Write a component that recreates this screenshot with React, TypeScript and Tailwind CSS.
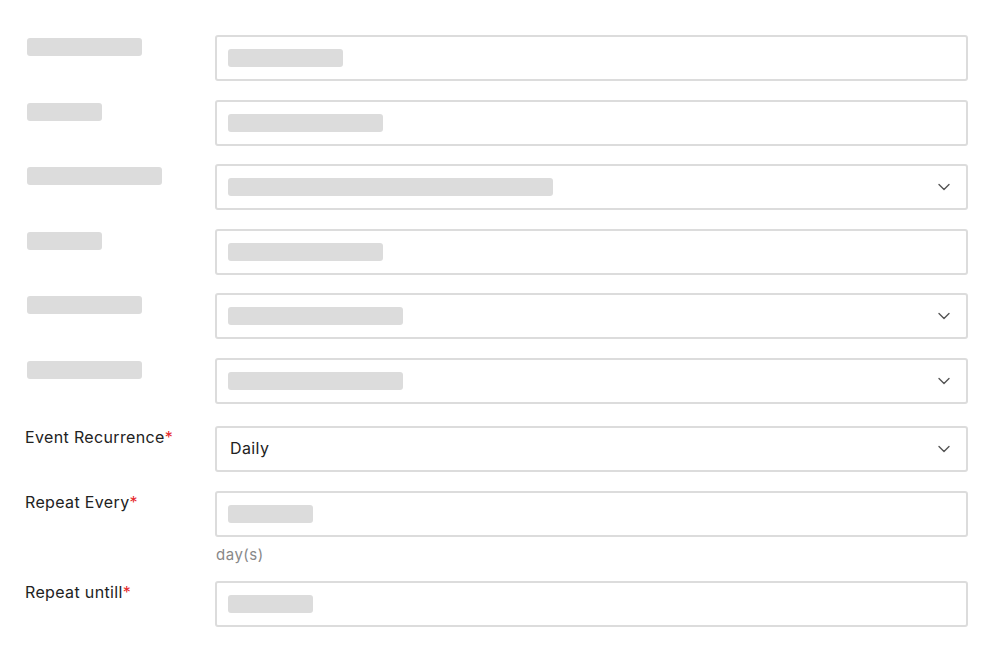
import React from "react";

const Chevron = () => (
  <svg width="12" height="8" viewBox="0 0 12 8" fill="none" className="shrink-0">
    <path d="M1 1.5 L6 6.5 L11 1.5" stroke="#555" strokeWidth="1.4" strokeLinecap="round" strokeLinejoin="round" />
  </svg>
);

const Bar = ({ w }: { w: string }) => <div className={`h-[18px] rounded-[3px] bg-[#dcdcdc] ${w}`} />;

type Row = { label: string; field: string; select?: boolean; mt: string };

const rows: Row[] = [
  { label: "w-[115px]", field: "w-[115px]", mt: "mt-0" },
  { label: "w-[75px]", field: "w-[155px]", mt: "mt-[19px]" },
  { label: "w-[135px]", field: "w-[325px]", select: true, mt: "mt-[18px]" },
  { label: "w-[75px]", field: "w-[155px]", mt: "mt-[19px]" },
  { label: "w-[115px]", field: "w-[175px]", select: true, mt: "mt-[18px]" },
  { label: "w-[115px]", field: "w-[175px]", select: true, mt: "mt-[19px]" },
];

const Box = ({ children }: { children: React.ReactNode }) => (
  <div className="flex h-[46px] w-full items-center justify-between rounded-[3px] border-2 border-[#dcdcdc] bg-white pl-[11px] pr-[16px]">
    {children}
  </div>
);

const TextLabel = ({ text }: { text: string }) => (
  <div className="w-[215px] shrink-0 pl-[25px] text-[16px] leading-[22px] tracking-[0.35px] text-[#222]">
    {text}
    <span className="text-[#e5262a]">*</span>
  </div>
);

export default function App() {
  return (
    <div
      className="min-h-[667px] w-[1000px] bg-white pt-[35px] pr-[32px]"
      style={{ fontFamily: "Inter, 'Noto Sans', sans-serif" }}
    >
      {rows.map((r, i) => (
        <div key={i} className={`flex ${r.mt}`}>
          <div className="w-[215px] shrink-0 pl-[27px] pt-[3px]">
            <Bar w={r.label} />
          </div>
          <div className="flex-1">
            <Box>
              <Bar w={r.field} />
              {r.select && <Chevron />}
            </Box>
          </div>
        </div>
      ))}
      <div className="mt-[22px] flex">
        <TextLabel text="Event Recurrence" />
        <div className="flex-1">
          <Box>
            <span className="pb-[3px] pl-[2px] text-[16px] leading-[22px] tracking-[0.4px] text-[#222]">Daily</span>
            <Chevron />
          </Box>
        </div>
      </div>
      <div className="mt-[19px] flex">
        <TextLabel text="Repeat Every" />
        <div className="flex-1">
          <Box>
            <Bar w="w-[85px]" />
          </Box>
          <div className="mt-[8px] pl-[1px] text-[15px] leading-[20px] tracking-[0.5px] text-[#888]">day(s)</div>
        </div>
      </div>
      <div className="mt-[16px] flex">
        <TextLabel text="Repeat untill" />
        <div className="flex-1">
          <Box>
            <Bar w="w-[85px]" />
          </Box>
        </div>
      </div>
    </div>
  );
}
